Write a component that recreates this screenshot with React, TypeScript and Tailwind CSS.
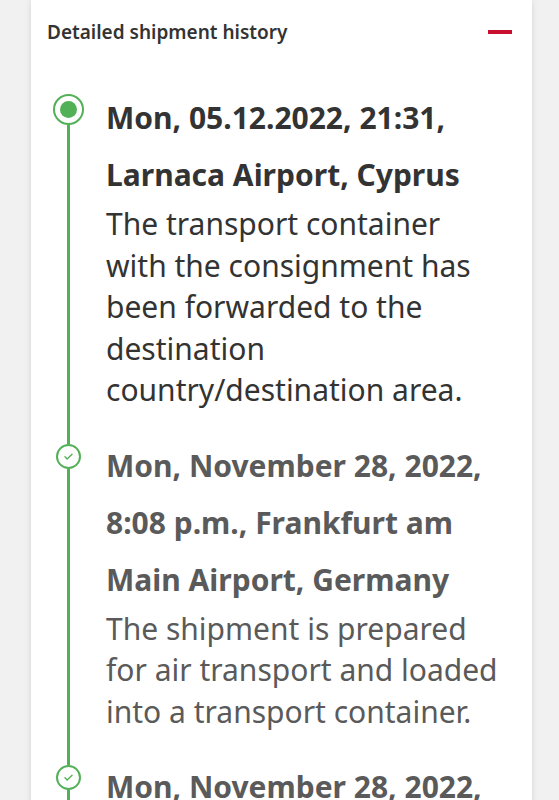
import React from "react";

type Event = {
	heading: string;
	text: string;
	current?: boolean;
};

const events: Event[] = [
	{
		heading: "Mon, 05.12.2022, 21:31, Larnaca Airport, Cyprus",
		text: "The transport container with the consignment has been forwarded to the destination country/destination area.",
		current: true,
	},
	{
		heading: "Mon, November 28, 2022, 8:08 p.m., Frankfurt am Main Airport, Germany",
		text: "The shipment is prepared for air transport and loaded into a transport container.",
	},
	{
		heading: "Mon, November 28, 2022, 7:12 p.m., Frankfurt am Main Airport, Germany",
		text: "The shipment has been processed in the parcel center.",
	},
];

function CurrentDot() {
	return (
		<div className="w-[31px] h-[31px] rounded-full border-[2.5px] border-[#52b157] bg-white flex items-center justify-center shrink-0">
			<div className="w-[17px] h-[17px] rounded-full bg-[#52b157]" />
		</div>
	);
}

function CheckDot() {
	return (
		<div className="w-[25px] h-[25px] rounded-full border-2 border-[#52b157] bg-white flex items-center justify-center shrink-0">
			<svg width="13" height="13" viewBox="0 0 24 24" fill="none" stroke="#52b157" strokeWidth="2.6" strokeLinecap="round" strokeLinejoin="round">
				<path d="M5.5 12.5l4 4L18.5 8" />
			</svg>
		</div>
	);
}

export default function App() {
	return (
		<div
			className="min-h-[800px] bg-[#f1f1f1] overflow-hidden"
			style={{ fontFamily: '"Noto Sans", "Open Sans", sans-serif' }}
		>
			<div className="ml-[31px] w-[501px] bg-white shadow-[0_0_6px_rgba(0,0,0,0.12)] min-h-[800px]">
				{/* Header */}
				<div className="flex items-center justify-between pl-4 pr-5 h-[64px]">
					<h2 className="text-[19px] font-semibold text-[#333]">
						Detailed shipment history
					</h2>
					<div className="w-6 h-[4px] bg-[#c8102e]" />
				</div>

				{/* Timeline */}
				<div className="flex flex-col pt-[25px]">
					{events.map((ev, i) => (
						<div key={i} className="flex">
							<div className="w-[75px] flex flex-col items-center shrink-0">
								{ev.current ? (
									<div className="h-[5px]" />
								) : (
									<div className="w-[2.5px] h-[7px] bg-[#52b157]" />
								)}
								{ev.current ? <CurrentDot /> : <CheckDot />}
								<div className="w-[2.5px] flex-1 bg-[#52b157]" />
							</div>
							<div
								className={`w-[396px] pb-[26px] ${ev.current ? "text-[#333]" : "text-[#5a5a5a]"}`}
							>
								<h3 className="text-[30px] font-bold leading-[57px]">
									{ev.heading}
								</h3>
								<p className="text-[30px] leading-[41.5px]">{ev.text}</p>
							</div>
						</div>
					))}
				</div>
			</div>
		</div>
	);
}
